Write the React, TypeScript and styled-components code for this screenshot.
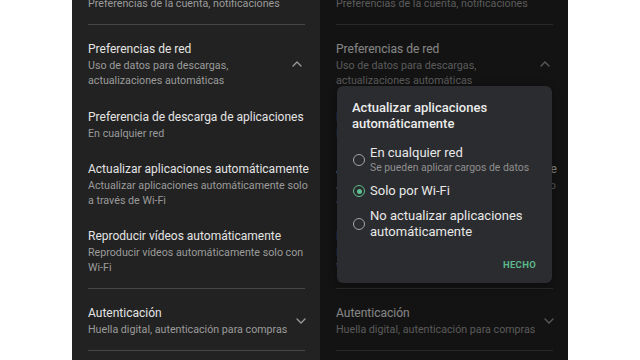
import React from "react";
import styled, { createGlobalStyle } from "styled-components";

const GlobalStyle = createGlobalStyle`
  html, body {
    margin: 0;
    padding: 0;
    background: #ffffff;
  }
  body {
    font-family: Roboto, "Noto Sans", "Liberation Sans", sans-serif;
    -webkit-font-smoothing: antialiased;
  }
`;

const Page = styled.div`
  width: 640px;
  height: 360px;
  display: flex;
  justify-content: center;
  overflow: hidden;
  background: #ffffff;
`;

const Panel = styled.div`
  position: relative;
  width: 248px;
  height: 360px;
  background: #222222;
  overflow: hidden;
`;

const List = styled.div`
  margin-top: -37px;
  display: flex;
  flex-direction: column;
`;

const Group = styled.div`
  padding: 15px 15px 13px 16px;
  display: flex;
  flex-direction: column;
  gap: 19px;
`;

const Divider = styled.div`
  height: 1px;
  margin: 0 15px 0 16px;
  background: #474747;
`;

const Header = styled.div`
  display: flex;
  align-items: center;
  gap: 8px;
`;

const HeaderText = styled.div`
  flex: 1;
`;

const Item = styled.div<{ $extra?: number }>`
  margin-top: ${(p) => p.$extra ?? 0}px;
`;

const Title = styled.div`
  font-size: 12px;
  line-height: 18px;
  color: #e4e4e4;
  white-space: nowrap;
`;

const Subtitle = styled.div`
  font-size: 10.7px;
  line-height: 15px;
  color: #9b9b9b;
  white-space: nowrap;
`;

const Chevron = styled.svg`
  width: 12px;
  height: 12px;
  margin-right: 2px;
  flex: none;
`;

const Scrim = styled.div`
  position: absolute;
  inset: 0;
  background: rgba(0, 0, 0, 0.42);
`;

const Dialog = styled.div`
  position: absolute;
  left: 17px;
  top: 86px;
  width: 215px;
  height: 197px;
  box-sizing: border-box;
  padding: 14px 15px 0 15px;
  background: #2b2c2f;
  border-radius: 6px;
  box-shadow: 0 2px 8px rgba(0, 0, 0, 0.4);
  display: flex;
  flex-direction: column;
`;

const DialogTitle = styled.div`
  font-size: 13px;
  font-weight: 500;
  line-height: 16px;
  color: #ececec;
`;

const Options = styled.div`
  margin-top: 13px;
  display: flex;
  flex-direction: column;
  gap: 9px;
`;

const Option = styled.div`
  display: flex;
  align-items: center;
  gap: 5px;
`;

const Radio = styled.span<{ $checked?: boolean }>`
  flex: none;
  box-sizing: border-box;
  width: 12px;
  height: 12px;
  margin-left: 1px;
  border-radius: 50%;
  border: 1.5px solid ${(p) => (p.$checked ? "#5fbf90" : "#a3a3a3")};
  display: flex;
  align-items: center;
  justify-content: center;
  &::after {
    content: "";
    width: 5px;
    height: 5px;
    border-radius: 50%;
    background: ${(p) => (p.$checked ? "#5fbf90" : "transparent")};
  }
`;

const OptionLabel = styled.div`
  font-size: 13px;
  line-height: 16px;
  color: #e8e8e8;
`;

const OptionHint = styled.div`
  font-size: 10.4px;
  line-height: 13px;
  color: #8f8f8f;
`;

const Actions = styled.div`
  margin-top: auto;
  height: 38px;
  display: flex;
  justify-content: flex-end;
  align-items: center;
`;

const DoneButton = styled.div`
  font-size: 9.5px;
  font-weight: 700;
  letter-spacing: 0.3px;
  color: #5bb68c;
  margin-right: 1px;
`;

const ChevronIcon = ({ up }: { up?: boolean }) => (
  <Chevron viewBox="0 0 12 12" fill="none">
    <path
      d={up ? "M2 8 L6 4 L10 8" : "M2 4 L6 8 L10 4"}
      stroke="#9c9c9c"
      strokeWidth="1.3"
      strokeLinecap="round"
      strokeLinejoin="round"
    />
  </Chevron>
);

const Lines = ({ lines }: { lines: string[] }) => (
  <>
    {lines.map((line) => (
      <Subtitle key={line}>{line}</Subtitle>
    ))}
  </>
);

const SettingsList = () => (
  <List>
    <Group>
      <Item>
        <Title>General</Title>
        <Lines lines={["Preferencias de la cuenta, notificaciones"]} />
      </Item>
    </Group>
    <Divider />
    <Group>
      <Header>
        <HeaderText>
          <Title>Preferencias de red</Title>
          <Lines lines={["Uso de datos para descargas,", "actualizaciones automáticas"]} />
        </HeaderText>
        <ChevronIcon up />
      </Header>
      <Item $extra={1}>
        <Title>Preferencia de descarga de aplicaciones</Title>
        <Lines lines={["En cualquier red"]} />
      </Item>
      <Item>
        <Title>Actualizar aplicaciones automáticamente</Title>
        <Lines lines={["Actualizar aplicaciones automáticamente solo", "a través de Wi-Fi"]} />
      </Item>
      <Item>
        <Title>Reproducir vídeos automáticamente</Title>
        <Lines lines={["Reproducir vídeos automáticamente solo con", "Wi-Fi"]} />
      </Item>
    </Group>
    <Divider />
    <Group>
      <Header>
        <HeaderText>
          <Title>Autenticación</Title>
          <Lines lines={["Huella digital, autenticación para compras"]} />
        </HeaderText>
        <ChevronIcon />
      </Header>
    </Group>
    <Divider />
  </List>
);

const App = () => (
  <>
    <GlobalStyle />
    <Page>
      <Panel>
        <SettingsList />
      </Panel>
      <Panel>
        <SettingsList />
        <Scrim />
        <Dialog>
          <DialogTitle>Actualizar aplicaciones automáticamente</DialogTitle>
          <Options>
            <Option>
              <Radio />
              <div>
                <OptionLabel>En cualquier red</OptionLabel>
                <OptionHint>Se pueden aplicar cargos de datos</OptionHint>
              </div>
            </Option>
            <Option>
              <Radio $checked />
              <OptionLabel>Solo por Wi-Fi</OptionLabel>
            </Option>
            <Option>
              <Radio />
              <OptionLabel>No actualizar aplicaciones automáticamente</OptionLabel>
            </Option>
          </Options>
          <Actions>
            <DoneButton>HECHO</DoneButton>
          </Actions>
        </Dialog>
      </Panel>
    </Page>
  </>
);

export default App;
